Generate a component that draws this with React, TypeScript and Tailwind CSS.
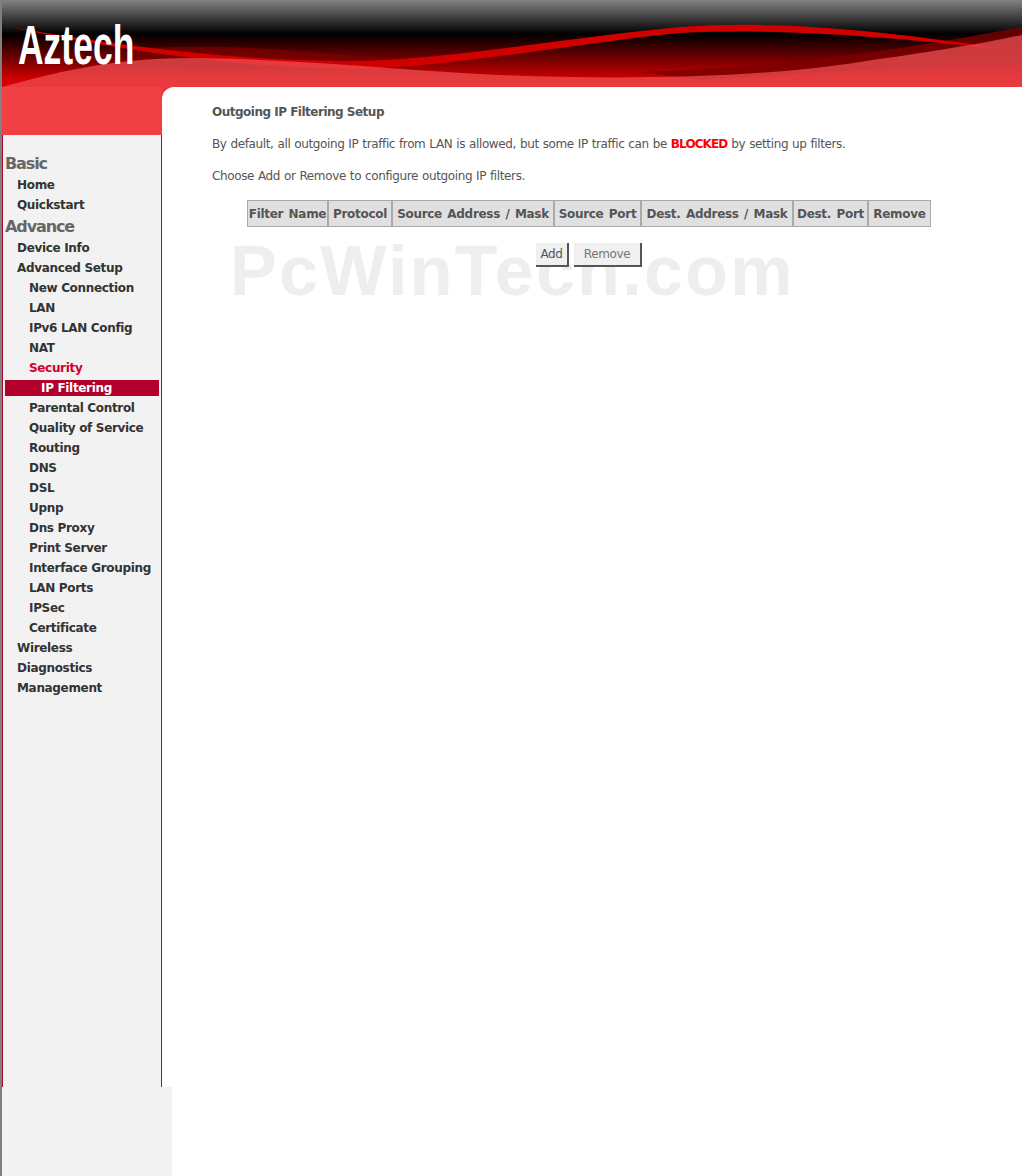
const basic = ["Home", "Quickstart"]

const advance: { label: string; level: number; active?: boolean; selected?: boolean }[] = [
  { label: "Device Info", level: 1 },
  { label: "Advanced Setup", level: 1 },
  { label: "New Connection", level: 2 },
  { label: "LAN", level: 2 },
  { label: "IPv6 LAN Config", level: 2 },
  { label: "NAT", level: 2 },
  { label: "Security", level: 2, active: true },
  { label: "IP Filtering", level: 3, selected: true },
  { label: "Parental Control", level: 2 },
  { label: "Quality of Service", level: 2 },
  { label: "Routing", level: 2 },
  { label: "DNS", level: 2 },
  { label: "DSL", level: 2 },
  { label: "Upnp", level: 2 },
  { label: "Dns Proxy", level: 2 },
  { label: "Print Server", level: 2 },
  { label: "Interface Grouping", level: 2 },
  { label: "LAN Ports", level: 2 },
  { label: "IPSec", level: 2 },
  { label: "Certificate", level: 2 },
  { label: "Wireless", level: 1 },
  { label: "Diagnostics", level: 1 },
  { label: "Management", level: 1 },
]

const columns = [
  { label: "Filter Name", width: "w-[81px]" },
  { label: "Protocol", width: "w-[64px]" },
  { label: "Source Address / Mask", width: "w-[162px]" },
  { label: "Source Port", width: "w-[87px]" },
  { label: "Dest. Address / Mask", width: "w-[152px]" },
  { label: "Dest. Port", width: "w-[75px]" },
  { label: "Remove", width: "w-[63px]" },
]

function HeaderArt() {
  return (
    <svg className="absolute inset-0" width="1020" height="86" viewBox="2 1 1020 86">
      <defs>
        <linearGradient id="sky" x1="0" y1="0" x2="0" y2="87" gradientUnits="userSpaceOnUse">
          <stop offset="0" stopColor="#828282" />
          <stop offset="0.39" stopColor="#000000" />
          <stop offset="0.9" stopColor="#cc0000" />
          <stop offset="1" stopColor="#dd0000" />
        </linearGradient>
      </defs>
      <rect y="0" width="1022" height="87" fill="url(#sky)" />
      <path d="M130 50 C210 42 300 50 420 62 L340 70 L130 68 Z" fill="#7a0000" fillOpacity="0.75" />
      <path d="M640 72 C780 68 900 50 1022 27 L1022 60 L700 80 Z" fill="#7a0000" fillOpacity="0.8" />
      <path
        d="M10 27 C110 44 220 60 340 61 C440 62 560 38 680 27 C780 20 880 30 1011 50 C880 36 780 28 680 33 C560 45 440 70 340 69 C220 66 110 48 10 27 Z"
        fill="#d00000"
      />
      <path
        d="M2 87 C50 74 110 58 190 58 C300 59 400 70 500 75 C620 80 760 78 860 62 C930 52 980 44 1022 35 L1022 87 Z"
        fill="#f05055"
        fillOpacity="0.72"
      />
    </svg>
  )
}

export default function App() {
  return (
    <div className="h-[1176px] w-[1022px] overflow-hidden border-l-2 border-t border-[#808080] bg-white font-['DejaVu_Sans',sans-serif] text-[12px]">
      <header className="relative h-[86px]">
        <HeaderArt />
        <div className="absolute left-[16px] top-[12px] origin-left font-['Liberation_Sans',sans-serif] text-[55px] font-bold leading-[64px] text-white [transform:scaleX(0.645)]">
          Aztech
        </div>
      </header>

      <div className="flex h-[1000px]">
        <aside className="flex w-[160px] shrink-0 flex-col">
          <div className="h-[48px] shrink-0 bg-[#f04044]" />
          <nav className="flex-1 border-x border-[#a80a30] bg-[#f2f2f2] pt-[18px] text-[12px] font-bold tracking-[-0.33px] text-[#333]">
            <div className="pl-[2px] text-[16px] leading-[22px] tracking-[-1.1px] text-[#666]">Basic</div>
            {basic.map((item) => (
              <div key={item} className="pl-[14px] leading-[20px]">
                {item}
              </div>
            ))}
            <div className="mt-[1px] pl-[2px] text-[16px] leading-[22px] tracking-[-1.1px] text-[#666]">Advance</div>
            {advance.map((item) => (
              <div
                key={item.label}
                className={
                  item.selected
                    ? "mx-[2px] my-[2px] h-[16px] w-[154px] bg-[#b2002a] pl-[36px] leading-[16px] text-white"
                    : item.level === 1
                      ? "pl-[14px] leading-[20px]"
                      : item.active
                        ? "pl-[26px] leading-[20px] text-[#d4002c]"
                        : "pl-[26px] leading-[20px]"
                }
              >
                {item.label}
              </div>
            ))}
          </nav>
        </aside>

        <div className="flex-1 bg-[#e8393d]">
          <main className="relative h-full rounded-tl-[12px] bg-white pl-[50px] pt-[17px] text-[12px] tracking-[-0.37px] text-[#555]">
            <h1 className="font-bold leading-[16px] tracking-[-0.5px]">Outgoing IP Filtering Setup</h1>
            <p className="mt-[16px] leading-[16px] [word-spacing:0.45px]">
              By default, all outgoing IP traffic from LAN is allowed, but some IP traffic can be{" "}
              <span className="font-bold tracking-[-0.9px] text-[#ff0000]">BLOCKED</span> by setting up filters.
            </p>
            <p className="mt-[16px] leading-[16px] [word-spacing:0.45px]">Choose Add or Remove to configure outgoing IP filters.</p>

            <div className="ml-[35px] mt-[16px] flex w-[684px] border-y border-[#a8a8a8]">
              {columns.map((col) => (
                <div
                  key={col.label}
                  className={`${col.width} h-[25px] shrink-0 whitespace-nowrap border-x border-[#aaa] bg-[#e0e0e0] text-center font-bold leading-[26px] tracking-[-0.3px] [word-spacing:1.5px]`}
                >
                  {col.label}
                </div>
              ))}
            </div>

            <div className="relative z-10 ml-[324px] mt-[16px] flex gap-[5px]">
              <button className="h-[24px] w-[33px] border-b-2 border-r-2 border-[#555] bg-[#f0f0f0] text-[#555]">Add</button>
              <button className="h-[24px] w-[68px] border-b-2 border-r-2 border-[#555] bg-[#f0f0f0] text-[#777]">Remove</button>
            </div>

            <div className="absolute left-[68px] top-[144px] whitespace-nowrap font-['Liberation_Sans',sans-serif] text-[70px] font-bold leading-[80px] tracking-[2.3px] text-[#eeeeee]">
              PcWinTech.com
            </div>
          </main>
        </div>
      </div>

      <div className="h-[89px] w-[170px] bg-[#f2f2f2]" />
    </div>
  )
}
